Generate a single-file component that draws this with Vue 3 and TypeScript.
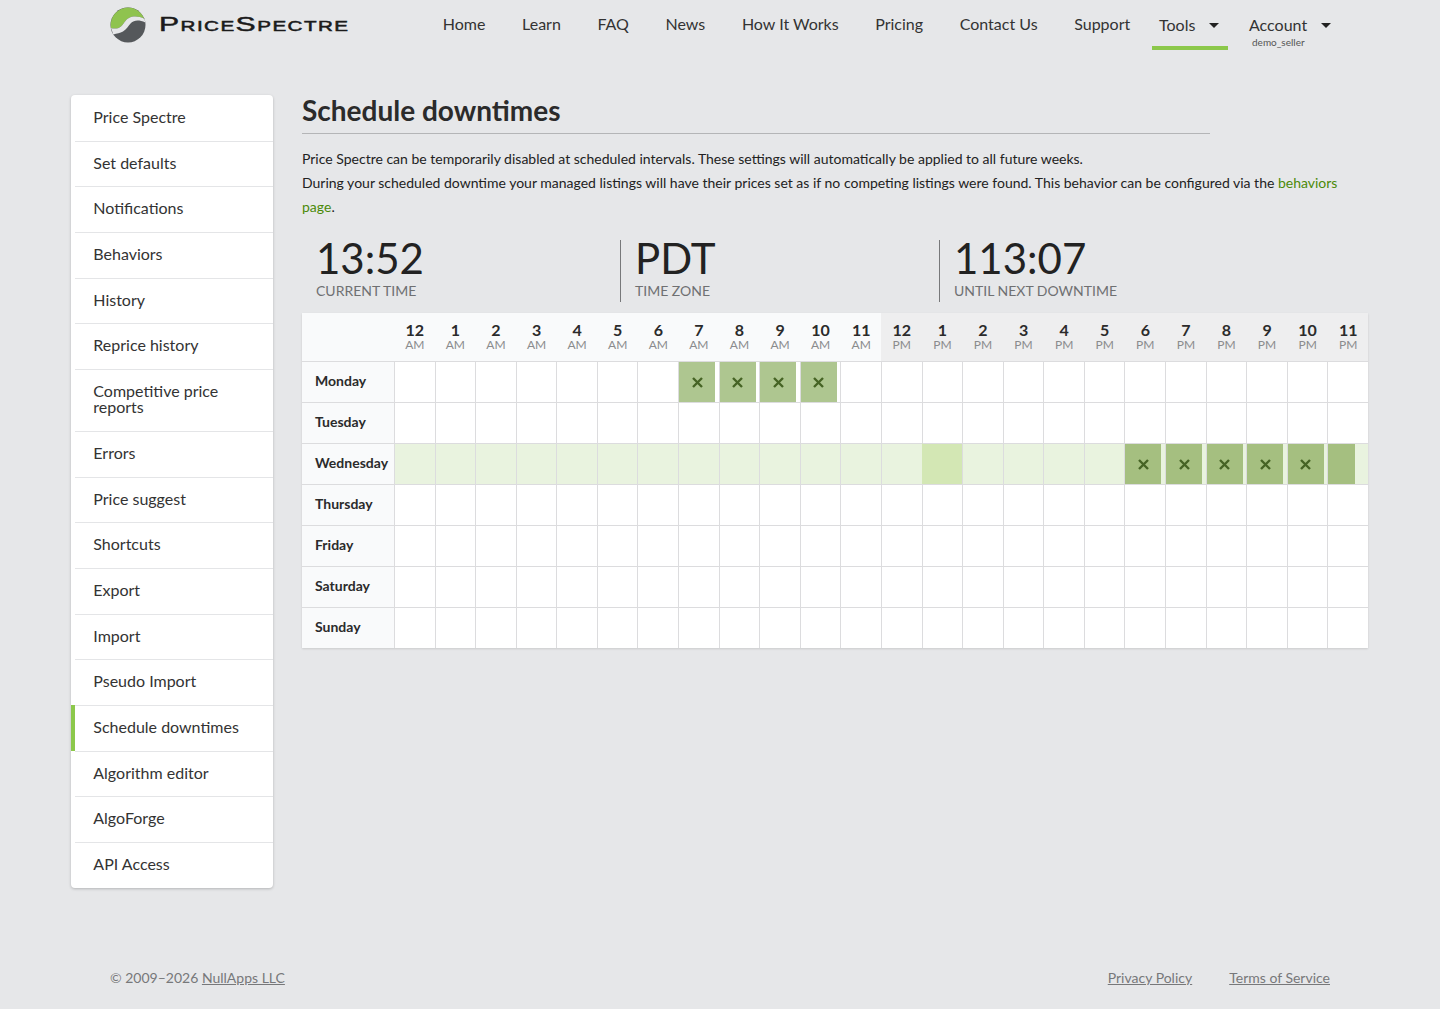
<script setup lang="ts">
const navLinks = ['Home', 'Learn', 'FAQ', 'News', 'How It Works', 'Pricing', 'Contact Us', 'Support']

const sideLinks = [
  'Price Spectre',
  'Set defaults',
  'Notifications',
  'Behaviors',
  'History',
  'Reprice history',
  'Competitive price reports',
  'Errors',
  'Price suggest',
  'Shortcuts',
  'Export',
  'Import',
  'Pseudo Import',
  'Schedule downtimes',
  'Algorithm editor',
  'AlgoForge',
  'API Access'
]

const stats = [
  { value: '13:52', label: 'Current time' },
  { value: 'PDT', label: 'Time zone' },
  { value: '113:07', label: 'Until next downtime' }
]

const days = ['Monday', 'Tuesday', 'Wednesday', 'Thursday', 'Friday', 'Saturday', 'Sunday']

const hours = Array.from({ length: 24 }, (_, i) => ({
  num: i % 12 === 0 ? 12 : i % 12,
  part: i < 12 ? 'AM' : 'PM'
}))

// downtime blocks per day index
const blocked: Record<number, number[]> = {
  0: [7, 8, 9, 10],
  2: [18, 19, 20, 21, 22]
}

const isBlocked = (day: number, hour: number) => (blocked[day] ?? []).includes(hour)
const isPartial = (day: number, hour: number) => day === 2 && hour === 23
const isNow = (day: number, hour: number) => day === 2 && hour === 13
</script>

<template>
  <div class="page">
    <header class="topbar">
      <a class="logo">
        <svg class="logo-mark" viewBox="0 0 36 36" width="36" height="36">
          <circle cx="18" cy="18" r="17.5" fill="#55585b" />
          <path d="M18 .5A17.5 17.5 0 0 0 1 21C4 22 8 22 11 19.500 14 17 15 13 19 11 23 9 29 9 34.500 12A17.500 17.500 0 0 0 18 .5Z" fill="#8fc34f" />
          <path d="M1 21C4 22 8 22 11 19.500 14 17 15 13 19 11 23 9 29 9 34.500 12L35.300 15.500C29 12.500 24 13 21 16 18 19 17 22 13 24.500 10 26 7 26.500 3.300 27.500Z" fill="#e6e7e9" />
        </svg>
        <span class="logo-text">PriceSpectre</span>
      </a>
      <nav class="nav">
        <a v-for="link in navLinks" :key="link" class="nav-link">{{ link }}</a>
        <a class="nav-link nav-menu active">
          <span>Tools</span><i class="caret"></i>
        </a>
        <a class="nav-link nav-menu account">
          <span>Account</span><i class="caret"></i>
          <small class="user">demo_seller</small>
        </a>
      </nav>
    </header>

    <div class="content">
      <aside class="sidebar">
        <a
          v-for="link in sideLinks"
          :key="link"
          class="side-item"
          :class="{ current: link === 'Schedule downtimes' }"
        >{{ link }}</a>
      </aside>

      <main class="main">
        <h1 class="title">Schedule downtimes</h1>
        <p class="intro">
          Price Spectre can be temporarily disabled at scheduled intervals. These settings will automatically be applied to all future weeks.<br />
          During your scheduled downtime your managed listings will have their prices set as if no competing listings were found. This behavior can be configured via the <a class="link">behaviors page</a>.
        </p>

        <div class="stats">
          <div v-for="stat in stats" :key="stat.label" class="stat">
            <div class="stat-value">{{ stat.value }}</div>
            <div class="stat-label">{{ stat.label }}</div>
          </div>
        </div>

        <div class="schedule">
          <div class="corner"></div>
          <div
            v-for="(hour, h) in hours"
            :key="h"
            class="hour"
            :class="{ pm: h >= 12 }"
          >
            <b>{{ hour.num }}</b>
            <span>{{ hour.part }}</span>
          </div>
          <template v-for="(day, d) in days" :key="day">
            <div class="day">{{ day }}</div>
            <div
              v-for="(hour, h) in hours"
              :key="h"
              class="cell"
              :class="{ hover: d === 2, now: isNow(d, h) }"
            >
              <div v-if="isBlocked(d, h) || isPartial(d, h)" class="block" :class="{ partial: isPartial(d, h), strong: d === 2 }">
                <svg v-if="isBlocked(d, h)" viewBox="0 0 11 11" width="11" height="11">
                  <path d="M1 1l9 9M10 1l-9 9" stroke="#466425" stroke-width="2.400" fill="none" />
                </svg>
              </div>
            </div>
          </template>
        </div>
      </main>
    </div>

    <footer class="footer">
      <div>© 2009–2026 <a>NullApps LLC</a></div>
      <div class="legal">
        <a>Privacy Policy</a>
        <a>Terms of Service</a>
      </div>
    </footer>
  </div>
</template>

<style>
html,
body {
  margin: 0;
  background: #e6e7e9;
}
</style>

<style scoped>
.page {
  min-height: 1009px;
  display: flex;
  flex-direction: column;
  font-family: Lato, "Open Sans", sans-serif;
  color: #222;
  box-sizing: border-box;
}

.topbar {
  height: 50px;
  padding: 0 110px;
  display: flex;
  justify-content: space-between;
}

.logo {
  display: flex;
  align-items: flex-start;
  gap: 13px;
  padding-top: 7px;
}

.logo-text {
  font-family: "Liberation Sans", Arial, sans-serif;
  font-variant: small-caps;
  font-size: 20.500px;
  line-height: 34px;
  letter-spacing: 1px;
  color: #1b1b1b;
  -webkit-text-stroke: 0.5px #1b1b1b;
  transform: scaleX(1.47);
  transform-origin: left center;
}

.nav {
  display: flex;
  align-items: flex-start;
  margin-right: 7px;
}

.nav-link {
  font-size: 16px;
  line-height: 20px;
  padding: 14px 18.3px 0;
  color: #333;
  white-space: nowrap;
}

.nav-menu {
  position: relative;
  display: flex;
  padding: 15px 0 0 7px;
  width: 76px;
  box-sizing: border-box;
  height: 50px;
  margin-left: 3.500px;
}

.nav-menu.active {
  border-bottom: 4px solid #8cc84b;
}

.nav-menu.account {
  margin-left: 14px;
  width: 81px;
  padding-left: 7px;
}

.caret {
  width: 0;
  height: 0;
  margin: 8px 0 0 14px;
  border-left: 5px solid transparent;
  border-right: 5px solid transparent;
  border-top: 5px solid #222;
}

.user {
  position: absolute;
  left: 10px;
  top: 35px;
  font-size: 10px;
  line-height: 14px;
  color: #555;
}

.content {
  display: flex;
  align-items: flex-start;
  gap: 29px;
  padding: 45px 72px 0 71px;
}

.sidebar {
  width: 202px;
  flex: none;
  background: #fff;
  border-radius: 4px;
  box-shadow: 0 1px 3px rgba(0, 0, 0, 0.22);
  overflow: hidden;
}

.side-item {
  position: relative;
  display: block;
  padding: 14px 30px 15.7px 18.3px;
  border-left: 4px solid transparent;
  font-size: 16px;
  line-height: 16px;
  color: #333;
}

.side-item:not(:last-child)::after {
  content: '';
  position: absolute;
  left: 0;
  right: 0;
  bottom: -1px;
  height: 1px;
  background: #e4e5e7;
}

.side-item.current {
  border-left-color: #8cc84b;
}

.main {
  flex: 1;
  min-width: 0;
}

.title {
  width: 908px;
  margin: 0;
  padding-bottom: 8px;
  border-bottom: 1px solid #b4b5b7;
  font-size: 28px;
  line-height: 30px;
  font-weight: 700;
  color: #2b2b2b;
}

.intro {
  margin: 13px 0 0;
  font-size: 14px;
  line-height: 24px;
  color: #222;
}

.link {
  color: #4b8a08;
}

.stats {
  display: flex;
  margin-top: 21px;
}

.stat {
  width: 319px;
  height: 62px;
  box-sizing: border-box;
  padding-left: 14px;
  border-right: 1px solid #77787a;
}

.stat:last-child {
  border-right: 0;
}

.stat-value {
  font-size: 42px;
  line-height: 36px;
  color: #222;
}

.stat-label {
  margin-top: 5px;
  font-size: 14px;
  line-height: 20px;
  text-transform: uppercase;
  color: #6f7072;
}

.schedule {
  margin-top: 11px;
  display: grid;
  grid-template-columns: 92px repeat(24, 1fr);
  background: #fff;
  box-shadow: 0 1px 2px rgba(0, 0, 0, 0.12);
}

.corner,
.hour,
.day {
  background: #f9fafb;
}

.hour {
  height: 48px;
  padding-top: 9px;
  border-left: 1px solid transparent;
  box-sizing: border-box;
  text-align: center;
}

.hour.pm {
  background: #eeeeef;
}

.hour b {
  display: block;
  font-size: 16px;
  line-height: 16px;
  font-weight: 700;
  color: #2b2b2b;
}

.hour span {
  display: block;
  font-size: 12px;
  line-height: 14px;
  color: #8a8b8d;
}

.day {
  height: 41px;
  box-sizing: border-box;
  padding-left: 13px;
  border-top: 1px solid #dcdcde;
  font-size: 14px;
  font-weight: 700;
  line-height: 38px;
  color: #2b2b2b;
}

.cell {
  height: 41px;
  box-sizing: border-box;
  border-top: 1px solid #dcdcde;
  border-left: 1px solid #dcdcde;
}

.cell.hover {
  background: #e9f3df;
}

.cell.now {
  background: #d3e7b4;
  border-left-color: #d3e7b4;
}

.block {
  width: 36px;
  height: 100%;
  display: flex;
  align-items: center;
  justify-content: center;
  background: #aec690;
}

.block.strong {
  background: #a5bf80;
}

.block.partial {
  width: 27px;
}

.footer {
  margin-top: auto;
  padding: 0 110px 21px;
  display: flex;
  justify-content: space-between;
  font-size: 14px;
  line-height: 20px;
  color: #77787a;
}

.footer a {
  text-decoration: underline;
}

.legal {
  display: flex;
  gap: 37px;
}
</style>
